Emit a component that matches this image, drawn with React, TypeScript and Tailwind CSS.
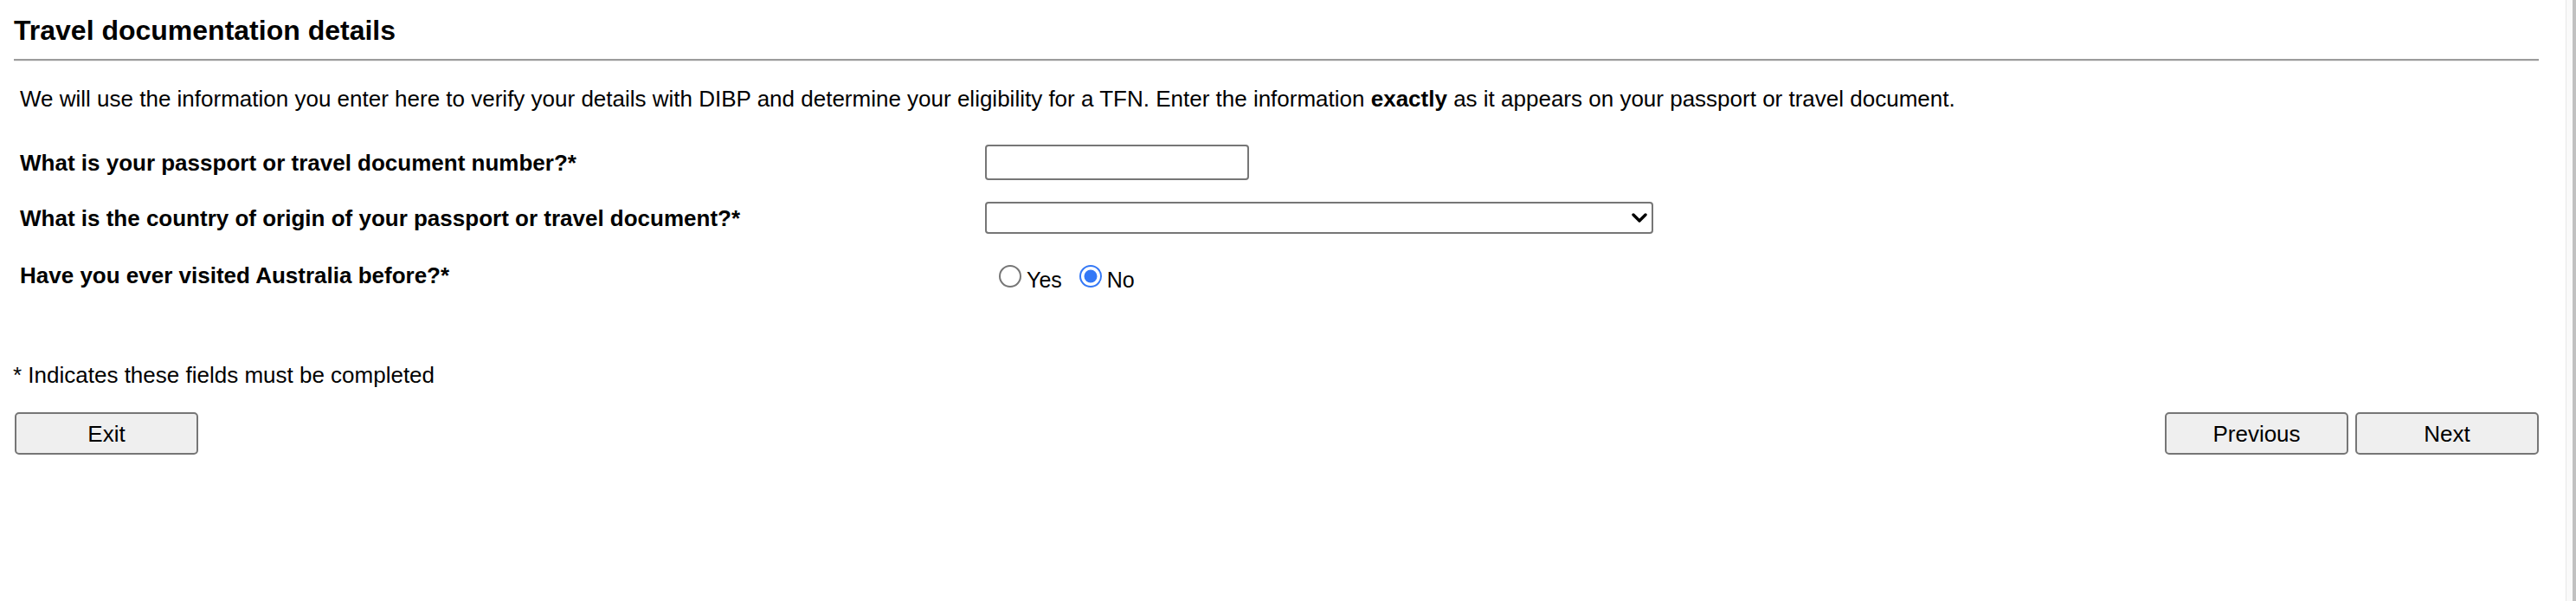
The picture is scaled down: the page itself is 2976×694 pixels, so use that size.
import React from "react";

function Radio({ checked }: { checked: boolean }) {
  return checked ? (
    <svg width="26" height="26" viewBox="0 0 26 26" className="block">
      <circle cx="13" cy="13" r="12" fill="#ffffff" stroke="#3478f6" strokeWidth="2" />
      <circle cx="13" cy="13" r="7.5" fill="#3478f6" />
    </svg>
  ) : (
    <svg width="26" height="26" viewBox="0 0 26 26" className="block">
      <circle cx="13" cy="13" r="12" fill="#ffffff" stroke="#767676" strokeWidth="2" />
    </svg>
  );
}

function Btn({ label }: { label: string }) {
  return (
    <button
      type="button"
      className="w-[212px] h-[49px] bg-[#efefef] border-2 border-[#767676] rounded-[5px] text-[26px] leading-[30px] text-black flex items-center justify-center"
    >
      {label}
    </button>
  );
}

export default function App() {
  return (
    <div
      className="flex w-[2976px] h-[694px] bg-white text-black overflow-hidden"
      style={{ fontFamily: '"Liberation Sans", Arial, sans-serif' }}
    >
      <div className="flex-1 pl-[16px] pr-[31px]">
        <h2 className="mt-[17px] text-[32px] leading-[36px] font-bold">Travel documentation details</h2>
        <div className="mt-[15px] h-[3px] border-t-2 border-t-[#9c9c9c] border-b border-b-[#ececec]" />

        <p className="mt-[28px] pl-[7px] text-[26px] leading-[30px]">
          We will use the information you enter here to verify your details with DIBP and determine your
          eligibility for a TFN. Enter the information <b>exactly</b> as it appears on your passport or travel
          document.
        </p>

        <div className="pl-[7px] flex flex-col">
          <div className="mt-[38px] flex items-center h-[41px]">
            <div className="w-[1115px] text-[26px] leading-[30px] font-bold">
              What is your passport or travel document number?*
            </div>
            <input
              type="text"
              className="w-[305px] h-[41px] border-2 border-[#767676] rounded-[4px] bg-white outline-none px-[4px] text-[24px]"
            />
          </div>

          <div className="mt-[25px] flex items-center h-[37px]">
            <div className="w-[1115px] text-[26px] leading-[30px] font-bold">
              What is the country of origin of your passport or travel document?*
            </div>
            <div className="relative w-[772px] h-[37px]">
              <select className="w-full h-full appearance-none border-2 border-[#767676] rounded-[4px] bg-white outline-none text-[24px]">
                <option value=""></option>
              </select>
              <svg
                className="absolute right-[7px] top-[13px] pointer-events-none"
                width="18"
                height="11"
                viewBox="0 0 18 11"
              >
                <path d="M2 2 L9 9 L16 2" fill="none" stroke="#000" strokeWidth="3.4" strokeLinecap="round" strokeLinejoin="round" />
              </svg>
            </div>
          </div>

          <div className="mt-[33px] flex items-start">
            <div className="w-[1115px] text-[26px] leading-[30px] font-bold">Have you ever visited Australia before?*</div>
            <div className="flex items-start pl-[16px]">
              <div className="mt-[3px]">
                <Radio checked={false} />
              </div>
              <span className="ml-[6px] mt-[6px] text-[25px] leading-[28px]">Yes</span>
              <div className="ml-[20px] mt-[3px]">
                <Radio checked={true} />
              </div>
              <span className="ml-[6px] mt-[6px] text-[25px] leading-[28px]">No</span>
            </div>
          </div>
        </div>

        <p className="mt-[81px] -ml-[1px] text-[26px] leading-[30px]">* Indicates these fields must be completed</p>

        <div className="mt-[28px] flex items-center justify-between pl-[1px]">
          <Btn label="Exit" />
          <div className="flex gap-[8px]">
            <Btn label="Previous" />
            <Btn label="Next" />
          </div>
        </div>
      </div>
      <div className="w-[12px] h-full border-l border-l-[#e8e8e8] bg-[#fafafa] flex justify-end">
        <div className="w-[4px] h-full bg-[#c1c1c1]" />
      </div>
    </div>
  );
}
